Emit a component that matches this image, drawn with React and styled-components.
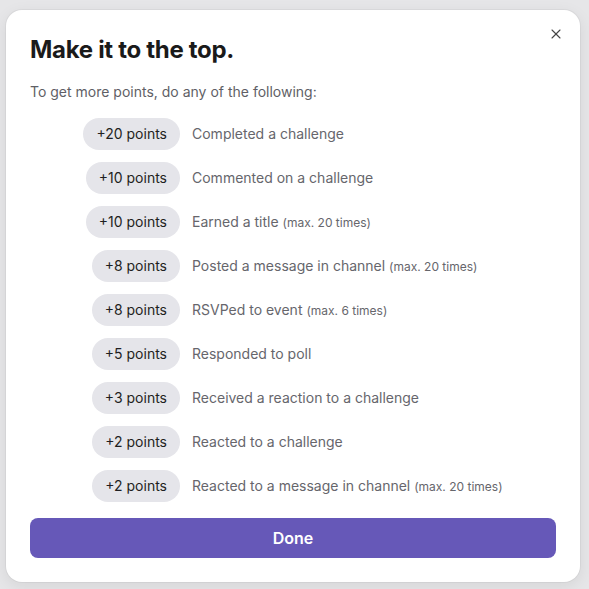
import React from 'react';
import styled, { createGlobalStyle } from 'styled-components';
import { X } from 'lucide-react';

const GlobalStyle = createGlobalStyle`
  html, body {
    margin: 0;
    padding: 0;
    background: #e6e6e8;
    font-family: Inter, "Noto Sans", sans-serif;
  }
`;

const Backdrop = styled.div`
  width: 589px;
  height: 589px;
  box-sizing: border-box;
  padding: 10px 9px 7px 6px;
  background: #e6e6e8;
`;

const Modal = styled.div`
  position: relative;
  box-sizing: border-box;
  height: 100%;
  background: #fff;
  border-radius: 16px;
  padding: 24px;
  display: flex;
  flex-direction: column;
  box-shadow: 0 0 0 1px rgba(0, 0, 0, 0.04), 0 4px 16px rgba(0, 0, 0, 0.08);
`;

const Close = styled.button`
  position: absolute;
  top: 16px;
  right: 16px;
  width: 16px;
  height: 16px;
  padding: 0;
  border: none;
  background: none;
  color: #444;
  display: flex;
  align-items: center;
  justify-content: center;
`;

const Title = styled.h1`
  margin: 0;
  font-size: 24px;
  line-height: 32px;
  font-weight: 700;
  color: #1a1a1a;
  letter-spacing: -0.3px;
`;

const Intro = styled.p`
  margin: 16px 0 0;
  font-size: 14px;
  line-height: 20px;
  color: #5f5f66;
`;

const List = styled.div`
  margin-top: 16px;
  display: grid;
  grid-template-columns: 150px 1fr;
  column-gap: 12px;
  row-gap: 12px;
  align-items: center;
`;

const Pill = styled.span`
  justify-self: end;
  height: 32px;
  padding: 0 13px;
  border-radius: 16px;
  background: #e5e5ea;
  color: #1f1f22;
  font-size: 14px;
  line-height: 32px;
  font-weight: 400;
`;

const Label = styled.span`
  font-size: 14px;
  line-height: 20px;
  color: #66666c;
`;

const Note = styled.small`
  font-size: 12px;
  color: #66666c;
`;

const Done = styled.button`
  margin-top: 16px;
  height: 40px;
  border: none;
  border-radius: 8px;
  background: #6658b8;
  color: #fff;
  font-family: Inter, sans-serif;
  font-size: 16px;
  font-weight: 600;
`;

const rows = [
  { points: 20, label: 'Completed a challenge' },
  { points: 10, label: 'Commented on a challenge' },
  { points: 10, label: 'Earned a title', note: '(max. 20 times)' },
  { points: 8, label: 'Posted a message in channel', note: '(max. 20 times)' },
  { points: 8, label: 'RSVPed to event', note: '(max. 6 times)' },
  { points: 5, label: 'Responded to poll' },
  { points: 3, label: 'Received a reaction to a challenge' },
  { points: 2, label: 'Reacted to a challenge' },
  { points: 2, label: 'Reacted to a message in channel', note: '(max. 20 times)' },
];

export default function App() {
  return (
    <Backdrop>
      <GlobalStyle />
      <Modal>
        <Close aria-label="Close">
          <X size={16} strokeWidth={1.6} />
        </Close>
        <Title>Make it to the top.</Title>
        <Intro>To get more points, do any of the following:</Intro>
        <List>
          {rows.map((r, i) => (
            <React.Fragment key={i}>
              <Pill>+{r.points} points</Pill>
              <Label>
                {r.label}
                {r.note && <> <Note>{r.note}</Note></>}
              </Label>
            </React.Fragment>
          ))}
        </List>
        <Done>Done</Done>
      </Modal>
    </Backdrop>
  );
}
